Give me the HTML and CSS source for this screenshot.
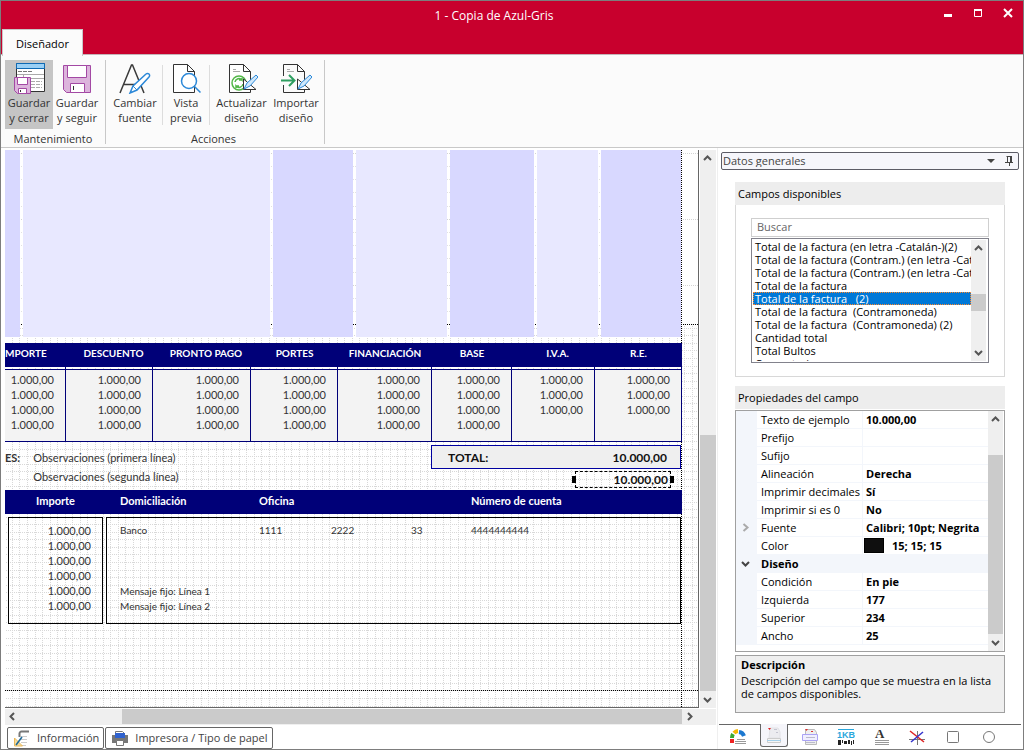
FILE: index.html
```html
<!DOCTYPE html>
<html lang="es">
<head>
<meta charset="utf-8">
<title>1 - Copia de Azul-Gris</title>
<link rel="stylesheet" href="styles.css">
</head>
<body>
<div class="window">
  <header class="titlebar">
    <h1 class="title">1 - Copia de Azul-Gris</h1>
    <div class="window-buttons">
      <button type="button" aria-label="Minimizar"><svg width="10" height="10"><path d="M1 6h8v3H1z" fill="#fff"/></svg></button>
      <button type="button" aria-label="Maximizar"><svg width="10" height="10"><path d="M1.500 1.500h7v7h-7z" fill="none" stroke="#fff"/><path d="M1 1h8v2H1z" fill="#fff"/></svg></button>
      <button type="button" aria-label="Cerrar"><svg width="10" height="10"><path d="M1 1l8 8M9 1l-8 8" stroke="#fff" stroke-width="2"/></svg></button>
    </div>
    <button type="button" class="ribbon-tab">Diseñador</button>
  </header>

  <div class="ribbon">
    <section class="ribbon-group">
      <div class="ribbon-items">
        <button type="button" class="ribbon-button active">
          <svg width="32" height="32" viewBox="0 0 32 32"><path d="M3.500 1.500h28v28h-28z" fill="#fff" stroke="#333"/><path d="M3.500 1.500h28v5h-28z" fill="#9bd0f5" stroke="#0f6ab4"/><path d="M5 9.500h14" stroke="#777" stroke-dasharray="4 1"/><path d="M4 12.500h27M10 16.500h21M10.500 13v4" stroke="#aaa"/><path d="M18 19.500h11M18 22.500h11M18 25.500h11" stroke="#aaa" stroke-dasharray="4 1"/><path d="M1.500 15.500h16v16h-13l-3-3z" fill="#dcb4dc" stroke="#a349a4"/><path d="M4.500 15.500h10v7h-10z" fill="#fff" stroke="#a349a4"/><path d="M5.500 26.500h8v5h-8z" fill="#fff" stroke="#a349a4"/><path d="M7.500 28v2" stroke="#333"/></svg>
          <span>Guardar<br>y cerrar</span>
        </button>
        <button type="button" class="ribbon-button">
          <svg width="32" height="32" viewBox="0 0 32 32"><path d="M2.500 3.500h27v27h-24l-3-3z" fill="#dcb4dc" stroke="#a349a4"/><path d="M6.500 3.500h19v12h-19z" fill="#fff" stroke="#a349a4"/><path d="M9.500 21.500h14v9h-14z" fill="#fff" stroke="#a349a4"/><path d="M12.500 24v4" stroke="#333"/></svg>
          <span>Guardar<br>y seguir</span>
        </button>
      </div>
      <h2>Mantenimiento</h2>
    </section>
    <section class="ribbon-group actions">
      <div class="ribbon-items">
        <button type="button" class="ribbon-button medium">
          <svg width="32" height="32" viewBox="0 0 32 32"><path d="M1 31L12.500 3h1L25 31M5 22.500h14" fill="none" stroke="#3a3a3a" stroke-width="1.500"/><path d="M11 31l3-7 13-12a2 2 0 0 1 3 3L18 28z" fill="#fff" stroke="#2b88d8" stroke-width="1.500"/><path d="M14 24l4 4" stroke="#2b88d8"/></svg>
          <span>Cambiar<br>fuente</span>
        </button>
        <i class="divider"></i>
        <button type="button" class="ribbon-button narrow">
          <svg width="32" height="32" viewBox="0 0 32 32"><path d="M3.500 2.500h14l7 7v21h-21zM17.500 2.500v7h7" fill="#fff" stroke="#333"/><circle cx="19" cy="19" r="7.500" fill="#fff" stroke="#2b88d8" stroke-width="1.500"/><path d="M24.500 24.500l6 6" stroke="#2b88d8" stroke-width="1.500"/></svg>
          <span>Vista<br>previa</span>
        </button>
        <i class="divider"></i>
        <button type="button" class="ribbon-button wide">
          <svg width="32" height="32" viewBox="0 0 32 32"><path d="M3.500 2.500h14l7 7v21h-21zM17.500 2.500v7h7" fill="#fff" stroke="#333"/><path d="M7 7.500h3M7 9.500h7" stroke="#aaa"/><circle cx="13" cy="21" r="7" fill="#fff" stroke="#52b748" stroke-width="1.500"/><path d="M9 20a4 4 0 0 1 7-2v-2M16 18h-3M17 22a4 4 0 0 1-7 2v2M10 24h3" fill="none" stroke="#52b748" stroke-width="1.500"/><path d="M17.500 17v10.500H30z" fill="#fff" stroke="#333"/><path d="M18 27l3-6 9-8 2 2-8 9z" fill="#cfe8fb" stroke="#2b88d8"/></svg>
          <span>Actualizar<br>diseño</span>
        </button>
        <button type="button" class="ribbon-button short">
          <svg width="32" height="32" viewBox="0 0 32 32"><path d="M3.500 14V2.500h14l7 7v21h-21V23M17.500 2.500v7h7" fill="none" stroke="#333"/><path d="M7 7.500h3M7 9.500h7" stroke="#aaa"/><path d="M1 18.500h13M9 13l5.500 5.500L9 24" fill="none" stroke="#2e9e60" stroke-width="2"/><path d="M17.500 17v10.500H30z" fill="#fff" stroke="#333"/><path d="M18 27l3-6 9-8 2 2-8 9z" fill="#cfe8fb" stroke="#2b88d8"/></svg>
          <span>Importar<br>diseño</span>
        </button>
      </div>
      <h2>Acciones</h2>
    </section>
  </div>

  <div class="workspace">
    <main class="designer">
      <div class="canvas-area">
        <div class="canvas">
          <svg class="grid-dots" width="100%" height="100%" aria-hidden="true">
            <defs>
              <pattern id="grid" x="7" y="4" width="68" height="68" patternUnits="userSpaceOnUse">
                <path d="M.5 0v68M7.500 0v68M15.500 0v68M23.500 0v68M30.500 0v68M38.500 0v68M45.500 0v68M53.500 0v68M60.500 0v68" stroke="#d8d8d8" stroke-dasharray="1 1"/>
                <path d="M0 .5h68M0 8.500h68M0 15.500h68M0 23.500h68M0 30.500h68M0 38.500h68M0 45.500h68M0 53.500h68M0 60.500h68" stroke="#d8d8d8" stroke-dasharray="1 1"/>
              </pattern>
              <pattern id="sparse" y="3" width="200" height="66" patternUnits="userSpaceOnUse">
                <path d="M0 .5h200" stroke="#d4d4d4" stroke-dasharray="1 1"/>
                <path d="M0 13.500h200M0 26.500h200M0 39.500h200M0 53.500h200" stroke="#e2e2e2" stroke-dasharray="1 1"/>
              </pattern>
            </defs>
            <rect y="174" width="100%" height="100%" fill="url(#grid)"/>
            <rect width="676" height="174" fill="url(#sparse)"/>
            <path d="M676 3.500h18M676 69.500h18M676 135.500h18" stroke="#d4d4d4" stroke-dasharray="1 1"/>
            <path d="M0 174.500h1200M0 540.500h1200M676.500 0v1200" stroke="#000" stroke-dasharray="1 1"/>
          </svg>
          <div class="sheet">
            <div class="stripes"><i></i><i></i><i></i><i></i><i></i><i></i><i></i></div>
            <table class="totals">
              <colgroup><col class="c1"><col class="c2"><col class="c3"><col class="c4"><col class="c5"><col class="c6"><col class="c7"><col class="c8"></colgroup>
              <thead><tr><th class="cut">MPORTE</th><th class="shift">DESCUENTO</th><th class="shift">PRONTO PAGO</th><th>PORTES</th><th>FINANCIACIÓN</th><th>BASE</th><th class="shift">I.V.A.</th><th>R.E.</th></tr></thead>
              <tbody>
                <tr class="spacer"><td></td><td></td><td></td><td></td><td></td><td></td><td></td><td></td></tr>
                <tr><td>1.000,00<br>1.000,00<br>1.000,00<br>1.000,00</td><td>1.000,00<br>1.000,00<br>1.000,00<br>1.000,00</td><td>1.000,00<br>1.000,00<br>1.000,00<br>1.000,00</td><td>1.000,00<br>1.000,00<br>1.000,00<br>1.000,00</td><td>1.000,00<br>1.000,00<br>1.000,00<br>1.000,00</td><td>1.000,00<br>1.000,00<br>1.000,00<br>1.000,00</td><td>1.000,00<br>1.000,00<br>1.000,00</td><td>1.000,00<br>1.000,00<br>1.000,00</td></tr>
              </tbody>
            </table>
            <div class="summary">
              <div class="notes">
                <b>ES:</b>
                <div><p>Observaciones (primera línea)</p><p>Observaciones (segunda línea)</p></div>
              </div>
              <div class="amounts">
                <div class="total-box"><span>TOTAL:</span><span>10.000,00</span></div>
                <div class="selected-field">10.000,00</div>
              </div>
            </div>
            <div class="bank-head"><span>Importe</span><span>Domiciliación</span><span>Oficina</span><span>Número de cuenta</span></div>
            <div class="bank-body">
              <div class="bank-amounts">1.000,00<br>1.000,00<br>1.000,00<br>1.000,00<br>1.000,00<br>1.000,00</div>
              <div class="bank-data">
                <div class="bank-line"><span>Banco</span><span>1111</span><span>2222</span><span>33</span><span>4444444444</span></div>
                <p>Mensaje fijo: Línea 1<br>Mensaje fijo: Línea 2</p>
              </div>
            </div>
          </div>
        </div>
        <div class="vscroll main-v">
          <button type="button" aria-label="Arriba"><svg width="9" height="9"><path d="M1 6l3.500-3.500L8 6" fill="none" stroke="#555" stroke-width="2"/></svg></button>
          <i class="thumb"></i>
          <button type="button" aria-label="Abajo"><svg width="9" height="9"><path d="M1 3l3.500 3.500L8 3" fill="none" stroke="#555" stroke-width="2"/></svg></button>
        </div>
      </div>
      <div class="hscroll">
        <button type="button" aria-label="Izquierda"><svg width="9" height="9"><path d="M6 1L2.500 4.500 6 8" fill="none" stroke="#555" stroke-width="2"/></svg></button>
        <i class="thumb"></i>
        <button type="button" aria-label="Derecha"><svg width="9" height="9"><path d="M3 1l3.500 3.500L3 8" fill="none" stroke="#555" stroke-width="2"/></svg></button>
      </div>
      <nav class="bottom-tabs">
        <button type="button"><svg width="18" height="18"><path d="M16 2.500H8.500a2 2 0 0 0-2 2V8" fill="none" stroke="#777" stroke-width="2"/><path d="M8 7.500h6M8 10.500h6M8 13.500h6M8 16.500h5" stroke="#ccc"/><path d="M1.500 9v8h8z" fill="#f6dc9b" stroke="#e8b85c"/><path d="M3 16l6-8" stroke="#1f6a99" stroke-width="1.500"/></svg>Información</button>
        <button type="button"><svg width="18" height="18"><path d="M4.500 5V2.500h7l2 2V6" fill="#fff" stroke="#777"/><path d="M1 6h16v8H1z" fill="#777"/><path d="M4 4h10v5H4z" fill="#2f62cf"/><path d="M5.500 11.500h7v5h-7z" fill="#fff" stroke="#777"/></svg>Impresora / Tipo de papel</button>
      </nav>
    </main>

    <aside class="panel">
      <div class="panel-head">
        <select aria-label="Panel"><option>Datos generales</option></select>
        <svg class="caret" width="8" height="4"><path d="M0 0h8L4 4z" fill="#444"/></svg>
        <button type="button" aria-label="Fijar panel"><svg width="9" height="10"><path d="M2.500 0v6M1.500 .5h5M0 6.500h8M4.500 7v3" fill="none" stroke="#444"/><path d="M5 0h2v6H5z" fill="#444"/></svg></button>
      </div>
      <div class="panel-body">
        <section class="fields">
          <h2>Campos disponibles</h2>
          <div class="fields-body">
            <input type="text" placeholder="Buscar" aria-label="Buscar">
            <div class="listbox">
              <ul role="listbox" aria-label="Campos disponibles">
                <li role="option">Total de la factura (en letra -Catalán-)(2)</li>
                <li role="option">Total de la factura (Contram.) (en letra -Catalán-)</li>
                <li role="option">Total de la factura (Contram.) (en letra -Catalán-)(2)</li>
                <li role="option">Total de la factura</li>
                <li role="option" aria-selected="true" class="selected">Total de la factura   (2)</li>
                <li role="option">Total de la factura  (Contramoneda)</li>
                <li role="option">Total de la factura  (Contramoneda) (2)</li>
                <li role="option">Cantidad total</li>
                <li role="option">Total Bultos</li>
                <li role="option">Comentario</li>
              </ul>
              <div class="vscroll list-v">
                <button type="button" aria-label="Arriba"><svg width="9" height="9"><path d="M1 6l3.500-3.500L8 6" fill="none" stroke="#555" stroke-width="2"/></svg></button>
                <i class="thumb"></i>
                <button type="button" aria-label="Abajo"><svg width="9" height="9"><path d="M1 3l3.500 3.500L8 3" fill="none" stroke="#555" stroke-width="2"/></svg></button>
              </div>
            </div>
          </div>
        </section>
        <section class="props">
          <h2>Propiedades del campo</h2>
          <div class="prop-grid">
            <table>
              <colgroup><col class="p1"><col class="p2"><col></colgroup>
              <tbody>
              <tr><td></td><th>Texto de ejemplo</th><td>10.000,00</td></tr>
              <tr><td></td><th>Prefijo</th><td></td></tr>
              <tr><td></td><th>Sufijo</th><td></td></tr>
              <tr><td></td><th>Alineación</th><td>Derecha</td></tr>
              <tr><td></td><th>Imprimir decimales</th><td>Sí</td></tr>
              <tr><td></td><th>Imprimir si es 0</th><td>No</td></tr>
              <tr><td><svg width="9" height="9"><path d="M2.500 1l4 3.500-4 3.500" fill="none" stroke="#aaa" stroke-width="2"/></svg></td><th>Fuente</th><td>Calibri; 10pt; Negrita</td></tr>
              <tr><td></td><th>Color</th><td class="color"><i></i>15; 15; 15</td></tr>
              <tr class="category"><td><svg width="9" height="9"><path d="M1 3l3.500 3.500L8 3" fill="none" stroke="#444" stroke-width="2"/></svg></td><th colspan="2">Diseño</th></tr>
              <tr><td></td><th>Condición</th><td>En pie</td></tr>
              <tr><td></td><th>Izquierda</th><td>177</td></tr>
              <tr><td></td><th>Superior</th><td>234</td></tr>
              <tr><td></td><th>Ancho</th><td>25</td></tr>
              </tbody>
            </table>
            <div class="vscroll prop-v">
              <button type="button" aria-label="Arriba"><svg width="9" height="9"><path d="M1 6l3.500-3.500L8 6" fill="none" stroke="#555" stroke-width="2"/></svg></button>
              <i class="thumb"></i>
              <button type="button" aria-label="Abajo"><svg width="9" height="9"><path d="M1 3l3.500 3.500L8 3" fill="none" stroke="#555" stroke-width="2"/></svg></button>
            </div>
          </div>
        </section>
        <section class="description">
          <h3>Descripción</h3>
          <p>Descripción del campo que se muestra en la lista de campos disponibles.</p>
        </section>
      </div>
      <nav class="tool-tabs">
        <button type="button" aria-label="Datos generales"><svg width="18" height="16"><path d="M3 9a7 7 0 0 1 1-4" fill="none" stroke="#3aa832" stroke-width="4"/><path d="M3 10v4" stroke="#e22" stroke-width="4"/><path d="M5 4a6 6 0 0 1 4-2" fill="none" stroke="#f5b800" stroke-width="4"/><path d="M10 3a6 6 0 0 1 5 4" fill="none" stroke="#1c78d0" stroke-width="4"/><path d="M8 10.500h8M6 12.500h11M6 14.500h11" stroke="#999"/></svg></button>
        <button type="button" class="active" aria-label="Campos"><svg width="18" height="18"><path d="M5 2h8l2 4v6H4z" fill="#ececf0" stroke="#e2e2e6"/><path d="M3 2h3l-1.500 2z" fill="#d22"/><path d="M9 3.500h3M11 6.500h2" stroke="#c4c4d0"/><path d="M2.500 12.500h13v4h-13z" fill="#f4f4f4" stroke="#ccc"/><path d="M2 14.500h14" stroke="#a5d0ea"/></svg></button>
        <button type="button" aria-label="Cuerpo"><svg width="18" height="18"><path d="M4.500 1.500h9l2 3v12h-11z" fill="#eee" stroke="#bbb"/><path d="M4 1h3L5.500 3zM10 3h2v1h-2z" fill="#d33"/><path d="M1.500 6.500h15v6h-15z" fill="#f0efff" stroke="#aaa3f5"/><path d="M5 9.500h9M5 14.500h9" stroke="#bbc"/></svg></button>
        <button type="button" aria-label="Texto"><svg width="18" height="18"><path d="M1 1.500h16" stroke="#2ba7dc"/><text x="0" y="10" class="kb">1KB</text><path d="M1 12h3v5H1zM5 12h1v3H5zM7 13h3v3H7zM11 12h2v4h-2zM14 13h1v4h-1zM16 12h1v4h-1z" fill="#222"/></svg></button>
        <button type="button" aria-label="Fuente"><svg width="18" height="18"><text x="3" y="10" class="serif-a">A</text><path d="M3 12.500h14M3 14.500h14M3 16.500h14" stroke="#999"/></svg></button>
        <button type="button" aria-label="Líneas"><svg width="18" height="18"><path d="M9.500 3v14M1 11.500h16" stroke="#777"/><path d="M2 3l14 11" stroke="#d22" stroke-width="1.500"/><path d="M15 4L3 14" stroke="#33c" stroke-width="1.500"/></svg></button>
        <button type="button" aria-label="Rectángulo"><svg width="18" height="18"><rect x="3.500" y="3.500" width="11" height="11" rx="1" fill="none" stroke="#777"/></svg></button>
        <button type="button" aria-label="Elipse"><svg width="18" height="18"><circle cx="9" cy="9" r="5.500" fill="none" stroke="#777"/></svg></button>
      </nav>
    </aside>
  </div>
</div>
</body>
</html>
```
FILE: styles.css
```css
* { box-sizing: border-box; }
body, h1, h2, h3, p, ul { margin: 0; padding: 0; }
body { font-family: "Open Sans", "Noto Sans", sans-serif; font-size: 11px; line-height: 15px; color: #000; }
button { font: inherit; color: inherit; border: 0; background: none; padding: 0; }
h1, h2 { font-size: 11px; font-weight: 400; }
ul { list-style: none; }
svg { display: block; flex: none; }

.window { display: flex; flex-direction: column; min-height: 100vh; border: 1px solid #7d7d7d; background: #fff; }

.titlebar { display: grid; grid-template-columns: 1fr auto 1fr; grid-template-rows: 28px 25px; background: #c8002d; color: #fff; border-bottom: 1px solid #c4b4b8; }
.title { grid-column: 2; align-self: center; font-size: 12px; padding: 1px 36px 0 0; }
.window-buttons { grid-column: 3; display: flex; justify-content: flex-end; gap: 20px; padding: 7px 10px 0 0; align-items: flex-start; }
.ribbon-tab { grid-row: 2; grid-column: 1; justify-self: start; width: 81px; height: 27px; margin-left: 1px; background: #fbfbfb; border: 1px solid #c8c8c8; border-bottom: 0; color: #000; z-index: 1; align-self: start; }

.ribbon { display: flex; background: #fbfbfb; border-bottom: 1px solid #c8c8c8; padding: 5px 4px 3px; height: 93px; color: #333; }
.ribbon-group { display: flex; flex-direction: column; border-right: 1px solid #c8c8c8; padding-right: 4px; }
.ribbon-group.actions { padding: 0 5px 0 2px; }
.ribbon-group h2 { text-align: center; margin-top: 2px; }
.ribbon-items { display: flex; }
.ribbon-button { width: 48px; height: 69px; display: flex; flex-direction: column; align-items: center; padding-top: 2px; gap: 1px; }
.ribbon-button.active { background: #c5c5c5; }
.ribbon-button.medium { width: 54px; }
.ribbon-button.wide { width: 63px; }
.ribbon-button.short { width: 46px; }
.ribbon-button.narrow { width: 46px; }
.divider { width: 1px; height: 60px; margin-top: 5px; background: #ddd; }

.workspace { flex: 1; display: flex; min-height: 0; }
.designer { flex: 1; display: flex; flex-direction: column; min-width: 0; padding: 2px 1px 0 4px; border-right: 1px solid #efefef; }
.canvas-area { flex: 1; display: flex; min-height: 0; }
.canvas { flex: 1; position: relative; overflow: hidden; border-right: 1px solid #666; border-bottom: 1px solid #666; min-width: 0; }
.grid-dots { position: absolute; inset: 0; }
.sheet { position: relative; width: 677px; font-family: Lato, "Open Sans", sans-serif; font-size: 11px; color: #333; }
.stripes { display: grid; grid-template-columns: 15px 247px 80px 91px 84px 61px 80px; gap: 3px; height: 187px; }
.stripes i { background: #d8d8ff; }
.stripes i:nth-child(even) { background: #e8e8ff; }

.totals { margin-top: 6px; width: 677px; table-layout: fixed; border-collapse: separate; border-spacing: 0; }
.c1 { width: 61px; } .c2 { width: 87px; } .c3 { width: 98px; } .c4 { width: 87px; }
.c5 { width: 94px; } .c6 { width: 80px; } .c7 { width: 83px; } .c8 { width: 87px; }
.totals th { height: 24px; padding: 0 0 4px; background: #000078; color: #fff; font-size: 10px; font-weight: 700; line-height: 15px; white-space: nowrap; }
.totals th.cut { text-align: left; }
.totals th.shift { padding-left: 8px; }
.totals td { height: 73px; padding: 2px 11px 0 0; background: #f3f3f3; border: 1px solid #000078; border-left: 0; text-align: right; vertical-align: top; }
.totals .spacer td { height: 2px; padding: 0; border-width: 0 1px 0 0; background: none; line-height: 0; }

.summary { display: flex; justify-content: space-between; padding: 3px 1px 0 0; height: 48px; }
.notes { display: flex; gap: 13px; padding-top: 5px; }
.notes p { margin-bottom: 4px; }
.amounts { width: 250px; font-size: 12px; font-weight: 700; color: #111; }
.total-box { display: flex; justify-content: space-between; height: 24px; padding: 4px 13px 0 16px; border: 1px solid #0000a0; background: #efefef; }
.selected-field { position: relative; width: 96px; height: 17px; margin: 2px 10px 0 auto; padding-right: 2px; border: 1px dashed #000; text-align: right; }
.selected-field::before, .selected-field::after { content: ""; position: absolute; top: 4px; width: 4px; height: 7px; background: #000; }
.selected-field::before { left: -4px; }
.selected-field::after { right: -4px; }

.bank-head { display: grid; grid-template-columns: 84px 139px 212px 1fr; height: 24px; padding: 3px 0 0 31px; background: #000078; color: #fff; font-weight: 700; }
.bank-body { display: flex; gap: 3px; padding: 3px 1px 0 3px; height: 110px; }
.bank-amounts { width: 95px; padding: 5px 11px 0 0; border: 1px solid #000; text-align: right; }
.bank-data { flex: 1; padding: 5px 0 0 13px; border: 1px solid #000; font-size: 10px; }
.bank-line { display: grid; grid-template-columns: 139px 72px 80px 60px 1fr; margin-bottom: 46px; }

.vscroll { display: flex; flex-direction: column; width: 15px; background: #efefef; }
.vscroll button, .hscroll button { display: flex; align-items: center; justify-content: center; width: 15px; height: 17px; flex: none; }
.thumb { background: #cbcbcb; }
.main-v { width: 16px; margin-left: 1px; }
.main-v .thumb { flex: 1; margin-top: 268px; }
.hscroll { display: flex; margin: 1px 0 0; background: #efefef; height: 16px; }
.hscroll .thumb { flex: 1; margin: 0 0 1px 102px; }
.hscroll button:last-child { margin-right: 19px; height: 15px; }
.hscroll button:first-child { height: 15px; }

.bottom-tabs { display: flex; gap: 1px; padding: 2px 0 0 2px; color: #444; }
.bottom-tabs button { display: flex; align-items: center; gap: 6px; height: 22px; padding: 0 4px 1px 5px; border: 1px solid #666; border-radius: 2px; white-space: nowrap; }

.panel { flex: none; width: 305px; display: flex; flex-direction: column; padding: 4px 2px 1px 0; }
.panel-head { display: flex; align-items: center; height: 18px; margin: 0 2px 0 3px; border: 1px solid #5c5c66; border-radius: 2px; background: #f6f6fb; padding-right: 4px; }
.panel-head select { appearance: none; flex: 1; border: 0; background: none; font: inherit; color: #444; padding: 0 1px 2px; height: 16px; }
.caret { margin-right: 10px; }
.panel-body { flex: 1; display: flex; flex-direction: column; padding: 12px 16px 11px 17px; }
.panel h2 { height: 23px; padding: 4px 3px; background: #ededed; }
.fields-body { padding: 13px 15px; border: 1px solid #d8d8d8; border-top: 0; margin-bottom: 9px; }
.fields input { display: block; width: 100%; height: 19px; padding: 0 5px 2px; border: 1px solid #cfcfcf; font: inherit; margin-bottom: 1px; }
.fields input::placeholder { color: #666; }
.listbox { display: flex; height: 125px; border: 1px solid #82828c; padding: 1px 2px 1px 1px; }
.listbox ul { flex: 1; overflow: hidden; }
.listbox li { height: 13px; line-height: 13px; padding-left: 2px; white-space: pre; }
.listbox .selected { background: #0078d7; color: #fff; outline: 1px dotted #ff8728; outline-offset: -1px; }
.list-v .thumb { height: 17px; margin: 37px 0 auto; }

.prop-grid { display: flex; height: 242px; margin-top: 1px; padding-right: 1px; border: 1px solid #a0a0a0; }
.prop-grid table { flex: 1; table-layout: fixed; border-collapse: separate; border-spacing: 0; align-self: flex-start; width: 100%; }
.p1 { width: 21px; } .p2 { width: 106px; }
.prop-grid th, .prop-grid td { height: 18px; padding: 0 0 0 4px; line-height: 15px; border-bottom: 1px solid #f3f6fb; white-space: nowrap; }
.prop-grid th { text-align: left; font-weight: 400; border-right: 1px solid #f3f6fb; }
.prop-grid td { font-weight: 700; padding-left: 3px; }
.prop-grid td:first-child { background: #f3f6fb; padding-left: 5px; }
.prop-grid .category th { background: #f3f6fb; font-weight: 700; }
.color i { display: inline-block; width: 20px; height: 15px; margin-right: 8px; margin-left: -2px; background: #0f0f0f; border: 1px solid #000; vertical-align: top; }
.prop-v .thumb { flex: 1; margin-top: 27px; }

.description { flex: 1; margin-top: 3px; padding: 0 5px; border: 1px solid #a0a0a0; background: #efefef; }
.description h3 { font-size: 11px; line-height: 18px; }
.description p { line-height: 13px; }

.tool-tabs { display: flex; justify-content: space-between; height: 24px; border-top: 1px solid #666; margin-left: 1px; padding: 0 18px 0 5px; }
.tool-tabs button { width: 28px; height: 23px; display: flex; align-items: center; justify-content: center; }
.tool-tabs .active { margin-top: -1px; background: #f5f5fa; border: 1px solid #666; border-top: 0; border-radius: 0 0 3px 3px; }
.kb { font: 700 9px "Liberation Sans", sans-serif; fill: #2ba7dc; }
.serif-a { font: 700 13px "Liberation Serif", serif; fill: #333; }
```
